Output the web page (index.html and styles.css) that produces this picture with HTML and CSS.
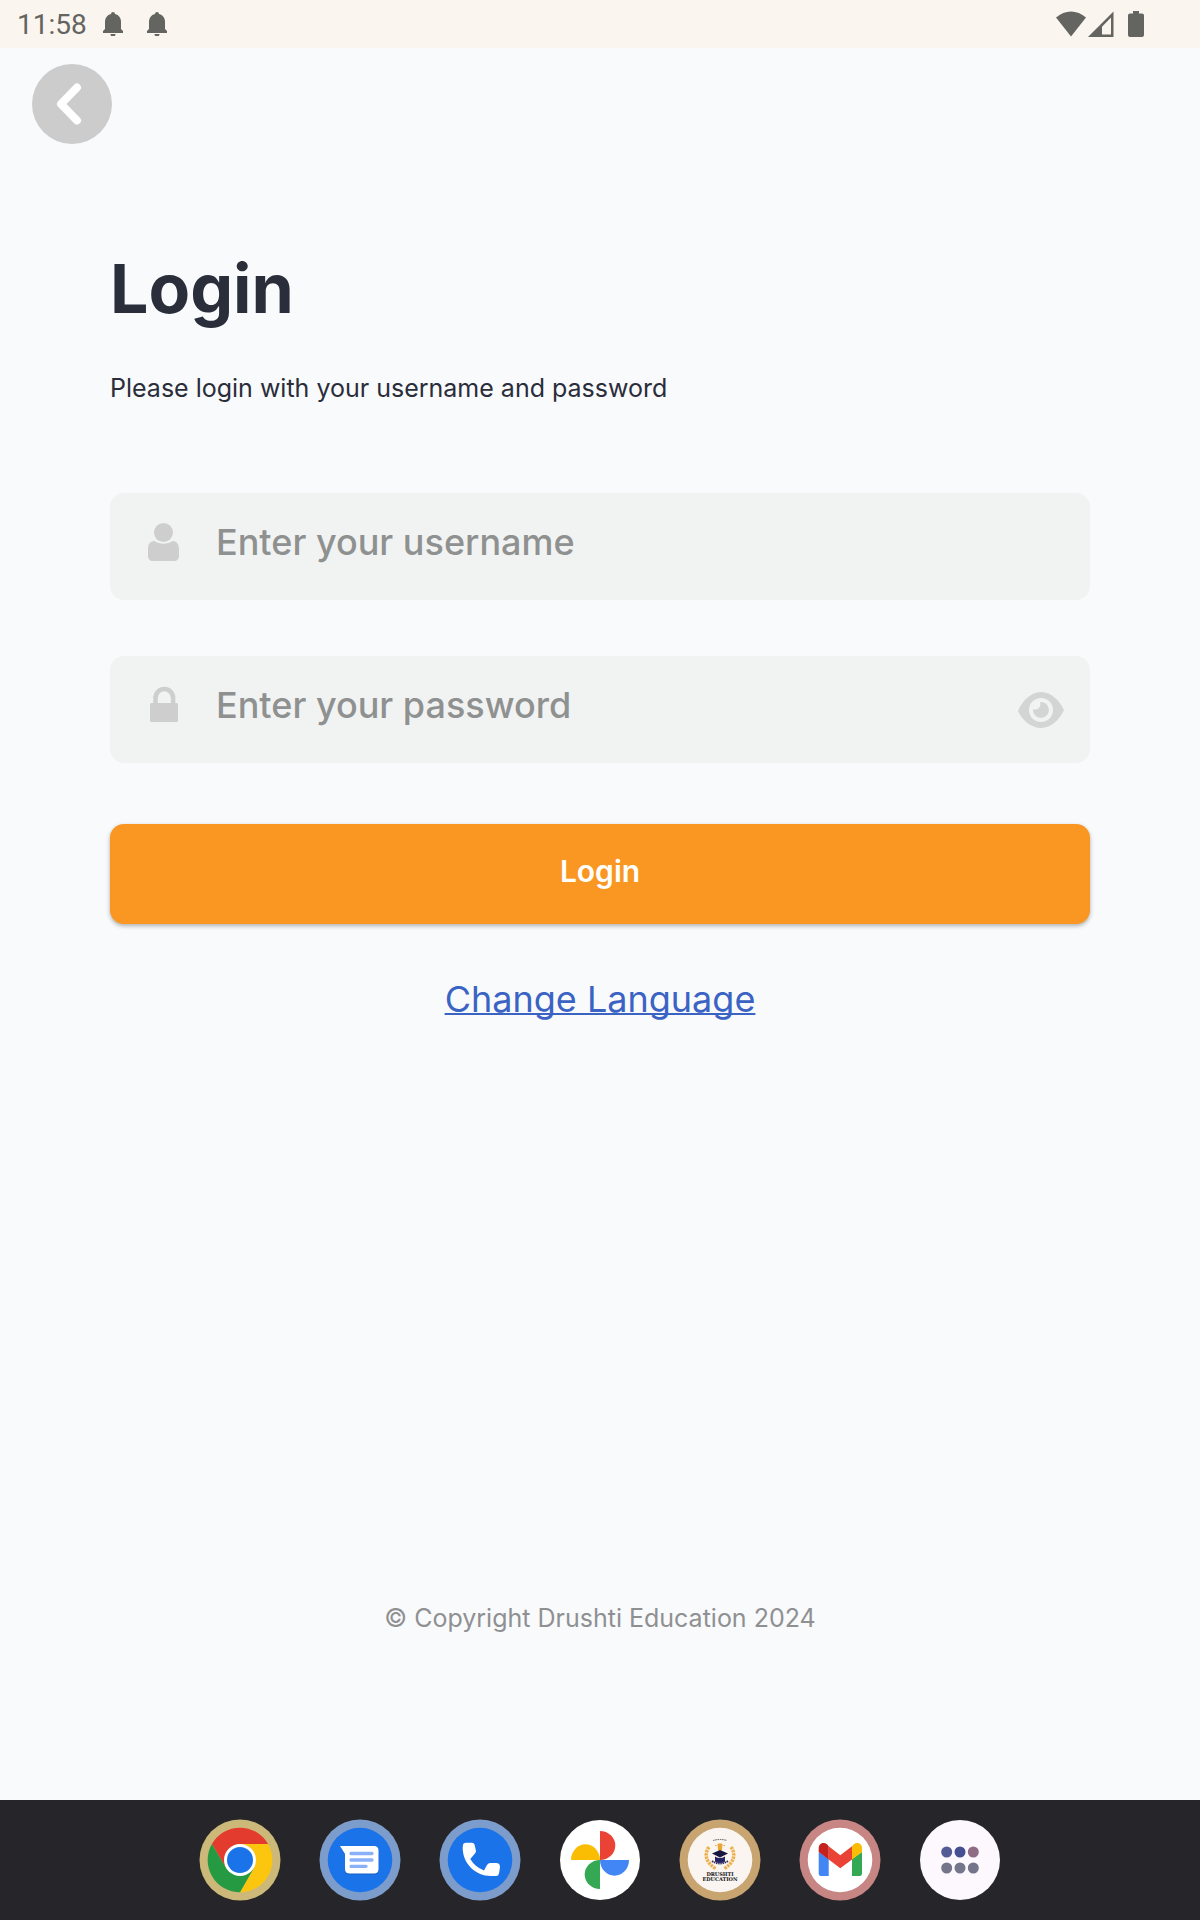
FILE: index.html
```html
<!DOCTYPE html>
<html lang="en">
<head>
  <meta charset="UTF-8" />
  <meta name="viewport" content="width=device-width, initial-scale=1.0"/>
  <title>Login</title>
  <link rel="stylesheet" href="styles.css">
</head>
<body>
  <div class="status-bar">
    <div class="status-left">
      <span class="time">11:58</span>
      <svg class="bell" width="20" height="24" viewBox="0 0 20 24"><path d="M10 0a2 2 0 0 1 2 2c4 1 6 4 6 8v7l2 2v2H0v-2l2-2v-7c0-4 2-7 6-8a2 2 0 0 1 2-2zM7.5 22h5a2.5 2.5 0 0 1-5 0z"/></svg>
      <svg class="bell" width="20" height="24" viewBox="0 0 20 24"><path d="M10 0a2 2 0 0 1 2 2c4 1 6 4 6 8v7l2 2v2H0v-2l2-2v-7c0-4 2-7 6-8a2 2 0 0 1 2-2zM7.5 22h5a2.5 2.5 0 0 1-5 0z"/></svg>
    </div>
    <div class="status-right">
      <svg width="30" height="26" viewBox="0 0 30 26"><path d="M15 25.5 0 6.500C9-1.500 21-1.500 30 6.500z"/></svg>
      <svg width="26" height="26" viewBox="0 0 26 26"><path fill-rule="evenodd" d="M25.5 0.5V26H0zM23 6.500 14 15.8V23.5h9z"/></svg>
      <svg class="battery" width="16" height="26" viewBox="0 0 16 26"><path d="M5 0h6v2.500h3a2 2 0 0 1 2 2V24a2 2 0 0 1-2 2H2a2 2 0 0 1-2-2V4.500a2 2 0 0 1 2-2h3z"/></svg>
    </div>
  </div>

  <header class="top-nav">
    <button class="back" type="button" aria-label="Back">
      <svg width="80" height="80" viewBox="0 0 80 80"><path d="M45 23.500 29 40 45 56.500" fill="none" stroke="#fff" stroke-width="8" stroke-linecap="round" stroke-linejoin="round"/></svg>
    </button>
  </header>

  <main class="container">
    <h1>Login</h1>
    <p class="subtitle">Please login with your username and password</p>

    <form class="login-form">
      <div class="field">
        <label for="username" aria-label="Username">
          <svg width="32" height="38" viewBox="0 0 32 38"><circle cx="15.500" cy="9.500" r="9.500"/><path d="M6.500 18c5 3.500 13 3.500 18 0 4 0 6.500 3 6.500 8v7c0 3-2 5-5 5H5c-3 0-5-2-5-5v-7c0-5 2.500-8 6.500-8z"/></svg>
        </label>
        <input type="text" id="username" placeholder="Enter your username" />
      </div>

      <div class="field">
        <label for="password" aria-label="Password">
          <svg width="32" height="38" viewBox="0 0 32 38"><path d="M7.500 17v-5a8.800 9 0 0 1 17.600 0v5" fill="none" stroke="#cecece" stroke-width="4.500"/><rect x="2" y="17" width="28" height="19" rx="1.500"/></svg>
        </label>
        <input type="password" id="password" placeholder="Enter your password" />
        <button class="toggle" type="button" aria-label="Show password">
          <svg width="48" height="38" viewBox="0 0 48 38"><path d="M1 20C5 10 14 1 24 1s19 9 23 18c-4 9-13 18-23 18S5 29 1 20z" fill="#d3d4d4"/><circle cx="24" cy="19" r="12" fill="#f1f3f2"/><path d="M23 11a8 8 0 1 1-7 7c3 2 9-1 7-7z" fill="#d3d4d4"/></svg>
        </button>
      </div>

      <button class="submit" type="submit">Login</button>
    </form>

    <a class="language" href="#">Change Language</a>
  </main>

  <footer class="copyright">© Copyright Drushti Education 2024</footer>

  <nav class="dock">
    <!-- Chrome -->
    <button type="button" aria-label="Chrome">
      <svg viewBox="0 0 82 82">
        <circle cx="41" cy="41" r="40.500" fill="#ccb879"/>
        <path d="M12.900 25A32.300 32.300 0 0 1 69.100 25H41v16L27.100 49z" fill="#e33b2e"/>
        <path d="M69.100 25A32.300 32.300 0 0 1 41 73.300L54.900 49 41 41V25z" fill="#fcc60f"/>
        <path d="M41 73.300A32.300 32.300 0 0 1 12.900 25L27.100 49 41 41l13.900 8z" fill="#259a43"/>
        <circle cx="41" cy="41" r="16" fill="#fff"/>
        <circle cx="41" cy="41" r="13" fill="#1a73e8"/>
      </svg>
    </button>
    <!-- Messages -->
    <button type="button" aria-label="Messages">
      <svg viewBox="0 0 82 82">
        <circle cx="41" cy="41" r="40.500" fill="#7c9ccb"/>
        <circle cx="41" cy="41" r="32.300" fill="#1a73e8"/>
        <path d="M22 29h34q3.500 0 3.500 3.500V52q0 3.500-3.500 3.500H30q-4 0-4-3.500V36z" fill="#165fc2"/>
        <path d="M21 27h34q4.500 0 4.500 4.500V50q0 4.500-4.500 4.500H30.500Q26 54.500 26 50V35z" fill="#fff"/>
        <path d="M32 34.500h21M32 41h21M32 47.300h15" stroke="#8ab0f8" stroke-width="3.300" stroke-linecap="round"/>
      </svg>
    </button>
    <!-- Phone -->
    <button type="button" aria-label="Phone">
      <svg viewBox="0 0 82 82">
        <circle cx="41" cy="41" r="40.500" fill="#7c9ccb"/>
        <circle cx="41" cy="41" r="32.300" fill="#1a73e8"/>
        <path d="M24 25.500Q24.500 23.700 27 23.700H33q2 0 2.500 1.800L37 32q0 1.500-1.500 3L31.300 40Q36 48 45 51.500L48 46q1-2 3.500-2H58q3 .500 3 4L60 54.500Q59.500 57 57 57H52C36 57 23.700 44 23.700 29z" fill="#fff"/>
      </svg>
    </button>
    <!-- Photos -->
    <button type="button" aria-label="Photos">
      <svg viewBox="0 0 82 82">
        <circle cx="41" cy="41" r="40" fill="#fff"/>
        <path d="M41 12a15.300 14.500 0 0 1 0 29z" fill="#ea4335"/>
        <path d="M70 41a14.500 15.700 0 0 1-29 0z" fill="#4285f4"/>
        <path d="M41 70a15.300 14.500 0 0 1 0-29z" fill="#34a853"/>
        <path d="M12 41a14.500 15.700 0 0 1 29 0z" fill="#fbbc04"/>
      </svg>
    </button>
    <!-- Drushti Education -->
    <button type="button" aria-label="Drushti Education">
      <svg viewBox="0 0 82 82">
        <circle cx="41" cy="41" r="40.500" fill="#c8a471"/>
        <circle cx="41" cy="41" r="32.300" fill="#faf5f1"/>
        <path d="M34 21.500q7-2 14 0" fill="none" stroke="#555" stroke-dasharray="1.500 .8"/>
        <path d="M39 25h4l-.5 6h-3zM36 26.500h1.500M44.500 26.500H46" fill="#e9a52f" stroke="#e9a52f"/>
        <path d="M30 28Q22 40 37 50M52 28Q60 40 45 50" fill="none" stroke="#eeb14d" stroke-width="3.500" stroke-dasharray="2.500 .8"/>
        <path d="M33 34.500 41 31l8 3.500-8 4z" fill="#16163f"/>
        <path d="M36 37.500q5 3 10 0v5q-5 3-10 0z" fill="#252264"/>
        <path d="M33 42q8 5 16 0" fill="none" stroke="#353263" stroke-width="2" stroke-dasharray="1.500 .7"/>
        <text class="logo-text" x="41" y="57">DRUSHTI</text>
        <text class="logo-text" x="41" y="62">EDUCATION</text>
      </svg>
    </button>
    <!-- Gmail -->
    <button type="button" aria-label="Gmail">
      <svg viewBox="0 0 82 82">
        <circle cx="41" cy="41" r="40.500" fill="#c78684"/>
        <circle cx="41" cy="41" r="32.300" fill="#fff"/>
        <path d="M19.700 33 29.700 40V57H22.500q-2.800 0-2.800-2.800z" fill="#4285f4"/>
        <path d="M63 33 53 40V57h7.200q2.800 0 2.800-2.800z" fill="#34a853"/>
        <path d="M29.700 27.300 41.300 36.300 53 27.300V40.500L41.300 49.300 29.700 40.500z" fill="#ea4335"/>
        <path d="M29.700 27.300V40.500L19.700 33V29c0-4.500 5-6.500 8.300-3.800z" fill="#c5221f"/>
        <path d="M53 27.300V40.500L63 33V29c0-4.500-5-6.500-8.300-3.800z" fill="#fbbc04"/>
      </svg>
    </button>
    <!-- All apps -->
    <button type="button" aria-label="All apps">
      <svg viewBox="0 0 82 82">
        <circle cx="41" cy="41" r="40" fill="#fcf8fe"/>
        <circle cx="27.700" cy="33" r="5.500" fill="#555c95"/>
        <circle cx="41" cy="33" r="5.500" fill="#454f91"/>
        <circle cx="54.300" cy="33" r="5.500" fill="#8f6c83"/>
        <circle cx="27.700" cy="49" r="5.500" fill="#74758a"/>
        <circle cx="41" cy="49" r="5.500" fill="#74758a"/>
        <circle cx="54.300" cy="49" r="5.500" fill="#74758a"/>
      </svg>
    </button>
  </nav>
</body>
</html>
```
FILE: styles.css
```css
* { box-sizing: border-box; }
body {
  font-family: Inter, 'Open Sans', sans-serif;
  margin: 0;
  background: #f9fafc;
  color: #2a2d3a;
  display: flex;
  flex-direction: column;
  min-height: 100vh;
}
h1, p { margin: 0; }
svg { display: block; }
button {
  font-family: inherit;
  border: none;
  padding: 0;
  background: none;
  cursor: pointer;
}

/* status bar */
.status-bar {
  display: flex;
  justify-content: space-between;
  align-items: center;
  height: 48px;
  padding: 0 56px 0 17px;
  background: #faf5ef;
  color: #646460;
}
.status-bar svg { fill: #646460; }
.status-left, .status-right {
  display: flex;
  align-items: center;
}
.time {
  font-family: Roboto, sans-serif;
  font-size: 28px;
  line-height: 32px;
  padding-top: 2px;
  margin-right: 16px;
}
.bell { margin-right: 24px; }
.status-right { gap: 2px; }
.battery { margin-left: 12px; }

/* back button */
.top-nav { padding: 16px 32px 0; }
.back {
  display: block;
  width: 80px;
  height: 80px;
  border-radius: 50%;
  background: #ccc;
}

/* login form */
.container {
  flex: 1;
  padding: 104px 110px 0;
}
h1 {
  font-size: 68px;
  line-height: 80px;
  font-weight: 700;
}
.subtitle {
  margin-top: 44px;
  font-size: 25px;
  line-height: 32px;
}
.login-form { margin-top: 89px; }
.field {
  display: flex;
  height: 107px;
  margin-bottom: 56px;
  padding: 0 25px 0 38px;
  border-radius: 14px;
  background: #f1f3f2;
}
.field label {
  display: flex;
  align-items: center;
  padding-bottom: 10px;
  fill: #cecece;
}
.field input {
  flex: 1;
  min-width: 0;
  padding: 0 0 10px 36px;
  border: none;
  outline: none;
  background: none;
  color: #2a2d3a;
  font-family: inherit;
  font-size: 36px;
  font-weight: 500;
}
.field input::placeholder {
  color: #8f9190;
  opacity: 1;
}
.submit {
  display: block;
  width: 100%;
  height: 100px;
  margin-top: 61px;
  padding-bottom: 6px;
  border-radius: 14px;
  background: #fa9722;
  box-shadow: 0 2px 4px rgba(0, 0, 0, 0.3);
  color: #fff;
  font-size: 30px;
  font-weight: 600;
}
.language {
  display: block;
  width: fit-content;
  margin: 55px auto 0;
  color: #3a63c4;
  font-size: 36px;
  line-height: 40px;
  text-decoration-thickness: 2px;
  text-decoration-skip-ink: none;
}
.copyright {
  padding-bottom: 166px;
  text-align: center;
  color: #8f9092;
  font-size: 25px;
  line-height: 32px;
}

/* app dock */
.dock {
  display: flex;
  justify-content: center;
  align-items: center;
  gap: 38px;
  height: 120px;
  background: #262529;
}
.dock svg {
  width: 82px;
  height: 82px;
}
.logo-text {
  font-family: 'DejaVu Serif', serif;
  font-size: 5px;
  font-weight: 700;
  text-anchor: middle;
  fill: #111;
}
```
